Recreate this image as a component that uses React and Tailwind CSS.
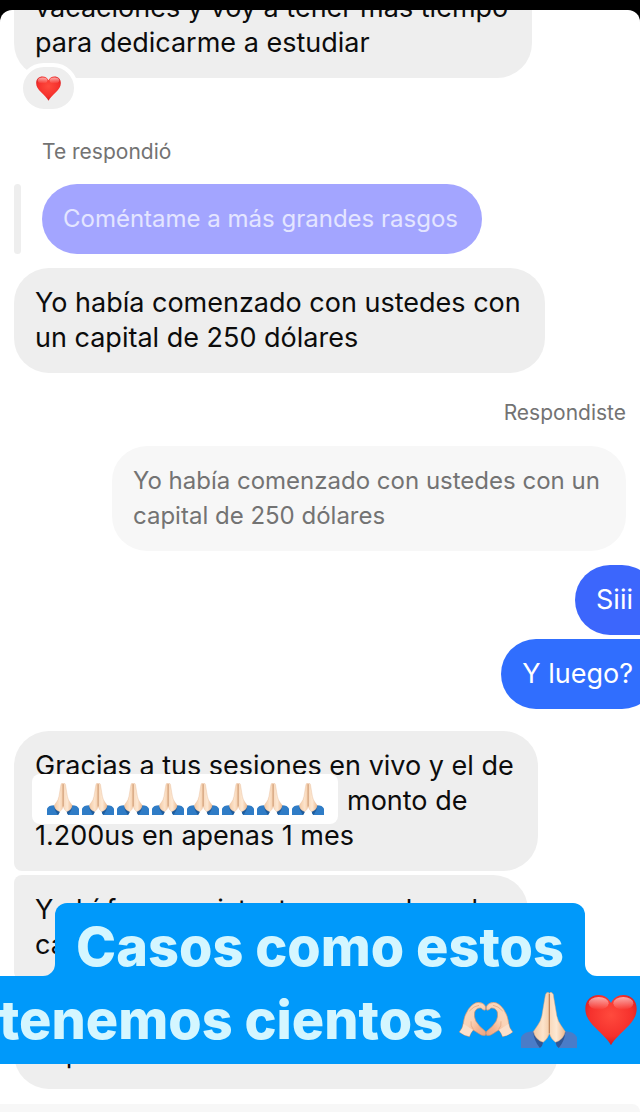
import { clsx } from "clsx"

function Heart({ className }) {
  return (
    <svg viewBox="0 0 156 156" className={className} role="img" aria-label="Corazón rojo">
      <defs>
        <radialGradient id="heartFill" cx="0.5" cy="0.4" r="0.65">
          <stop offset="0" stopColor="#ff4a3d" />
          <stop offset="0.65" stopColor="#f5302c" />
          <stop offset="1" stopColor="#c4161c" />
        </radialGradient>
        <linearGradient id="heartShine" x1="0" y1="0" x2="0" y2="1">
          <stop offset="0" stopColor="#fff" stopOpacity="0.6" />
          <stop offset="1" stopColor="#fff" stopOpacity="0" />
        </linearGradient>
      </defs>
      <path
        d="M78 154C70 138 52 122 32 102C12 82 1 66 1 44C1 19 18 3 41 3C58 3 71 12 78 27C85 12 98 3 115 3C138 3 155 19 155 44C155 66 144 82 124 102C104 122 86 138 78 154Z"
        fill="url(#heartFill)"
      />
      <ellipse cx="41" cy="28" rx="30" ry="19" fill="url(#heartShine)" />
      <ellipse cx="115" cy="28" rx="30" ry="19" fill="url(#heartShine)" />
    </svg>
  )
}

function PrayHands({ className, bright }) {
  return (
    <svg viewBox="0 0 166 166" className={className} role="img" aria-label="Manos juntas">
      <defs>
        <linearGradient id="prayLeft" x1="0" y1="0" x2="1" y2="0">
          <stop offset="0" stopColor="#f3c9a4" />
          <stop offset="0.6" stopColor="#fce3cb" />
          <stop offset="1" stopColor="#f3cdab" />
        </linearGradient>
        <linearGradient id="prayRight" x1="0" y1="0" x2="1" y2="0">
          <stop offset="0" stopColor="#f8d8ba" />
          <stop offset="0.45" stopColor="#fde8d3" />
          <stop offset="1" stopColor="#ecb98f" />
        </linearGradient>
      </defs>
      <g fill={bright ? "#2f7cc6" : "#4a7cc8"}>
        <path d="M0 134Q8 116 38 116Q44 138 66 148Q64 160 56 166H0Z" />
        <path d="M166 134Q158 116 130 116Q124 138 102 148Q104 160 112 166H166Z" />
      </g>
      <g fill={bright ? "#1f5c9c" : "#2f5797"}>
        <path d="M36 117Q42 140 66 148Q64 160 56 166Q38 144 36 117Z" />
        <path d="M132 117Q126 140 102 148Q104 160 112 166Q130 144 132 117Z" />
      </g>
      <path
        d="M84 4Q81 -1 76 2Q72 5 71 16L62 70Q58 88 50 98L37 117Q42 142 66 149Q80 138 84 122Z"
        fill="url(#prayLeft)"
        stroke="#dca57c"
        strokeWidth="1.5"
      />
      <path
        d="M84 4Q87 -1 92 2Q97 5 97 16L106 70Q110 88 118 98L131 117Q126 142 102 149Q88 138 84 122Z"
        fill="url(#prayRight)"
        stroke="#dca57c"
        strokeWidth="1.5"
      />
      <path d="M84 6V122" stroke="#b97c52" strokeWidth="3" />
    </svg>
  )
}

function HeartHands({ className }) {
  const hand =
    "M1 90Q12 78 13 62Q15 42 28 22Q42 2 58 1Q74 2 79 12Q82 20 78 25Q72 25 66 18Q52 17 47 30Q44 44 51 58Q60 74 79 88Q83 94 79 100Q70 103 58 94Q48 87 42 84Q35 92 31 104Q14 100 1 90Z"
  return (
    <svg viewBox="0 0 162 108" className={className} role="img" aria-label="Manos formando un corazón">
      <defs>
        <linearGradient id="loveHand" x1="0" y1="0" x2="1" y2="1">
          <stop offset="0" stopColor="#fbdcc0" />
          <stop offset="0.5" stopColor="#fad3b7" />
          <stop offset="0.75" stopColor="#f3b391" />
          <stop offset="1" stopColor="#e8a583" />
        </linearGradient>
      </defs>
      {["", "translate(162 0) scale(-1 1)"].map((flip) => (
        <g key={flip} transform={flip || undefined}>
          <path d={hand} fill="url(#loveHand)" stroke="#cf936d" strokeWidth="2" />
          <path d="M2 90Q12 80 14 66L42 84Q35 92 31 103Q14 100 2 90Z" fill="#fbe0cc" />
          <path d="M31 27Q44 12 60 10M43 82Q34 72 36 58" fill="none" stroke="#dda27c" strokeWidth="2" />
        </g>
      ))}
    </svg>
  )
}

function Bubble({ className, children }) {
  return (
    <div className={clsx("w-fit pt-[17px] pr-[24px] pb-[18px] pl-[21px] leading-[35px] whitespace-nowrap", className)}>
      {children}
    </div>
  )
}

export default function App() {
  return (
    <main className="relative overflow-hidden bg-black pt-[10px] font-['Inter','Liberation_Sans',sans-serif] text-[27px] text-[#0c0c0c]">
      <section className="flex flex-col overflow-hidden rounded-t-xl bg-white">
        <div className="flex flex-col items-start pl-[14px]">
          <Bubble className="-mt-[37px] rounded-[35px] bg-[#eeeeee]">
            vacaciones y voy a tener más tiempo
            <br />
            para dedicarme a estudiar
          </Bubble>
          <div className="z-10 -mt-[15px] ml-[5px] flex h-[50px] w-[59px] items-center justify-center rounded-full border-4 border-white bg-[#eeeeee]">
            <Heart className="size-[25px]" />
          </div>

          <p className="mt-[25px] ml-[28px] text-[21px] leading-[28px] text-[#737373]">Te respondió</p>
          <div className="mt-[18px] flex gap-[21px]">
            <div className="w-[7px] rounded-sm bg-[#eeeeee]" />
            <Bubble className="rounded-full bg-[#a3a5ff] text-[24px] text-[#e4e5ff]">Coméntame a más grandes rasgos</Bubble>
          </div>
          <Bubble className="mt-[14px] rounded-[35px] bg-[#eeeeee]">
            Yo había comenzado con ustedes con
            <br />
            un capital de 250 dólares
          </Bubble>
        </div>

        {/* Sent messages */}
        <div className="flex flex-col items-end">
          <p className="mt-[26px] mr-[14px] text-[21px] leading-[28px] text-[#737373]">Respondiste</p>
          <Bubble className="mt-[19px] mr-[14px] min-w-[514px] rounded-[35px] bg-[#f7f7f7] text-[24px] text-[#737373]">
            Yo había comenzado con ustedes con un
            <br />
            capital de 250 dólares
          </Bubble>
          <Bubble className="mt-[14px] -mr-[17px] rounded-[35px] rounded-br-lg bg-[#3c66fc] text-white">Siii</Bubble>
          <Bubble className="mt-1 -mr-[17px] rounded-[35px] rounded-tr-lg bg-[#306efe] text-white">Y luego?</Bubble>
        </div>

        <div className="mt-[22px] flex flex-col items-start gap-1 pl-[14px]">
          <Bubble className="rounded-[35px] rounded-bl-lg bg-[#eeeeee]">
            Gracias a tus sesiones en vivo y el de
            <br />
            <span className="relative inline-block h-[35px] w-[312px] align-top">
              {/* Sticker strip laid over the message */}
              <span className="absolute -top-[9px] -left-[3px] flex h-[50px] w-[306px] items-center justify-center gap-[3px] rounded-lg bg-white">
                {Array.from({ length: 8 }, (_, i) => (
                  <PrayHands key={i} bright className="size-8" />
                ))}
              </span>
            </span>
            monto de
            <br />
            1.200us en apenas 1 mes
          </Bubble>
          <Bubble className="min-w-[514px] rounded-l-lg rounded-r-[35px] bg-[#eeeeee]">
            Y ahí fue consistente y ganadora de
            <br />
            casos
          </Bubble>
          <Bubble className="min-w-[544px] rounded-[35px] rounded-tl-lg bg-[#eeeeee]">
            <br />
            capital
          </Bubble>
        </div>
        <div className="mt-[15px] h-[8px] rounded-tr-[20px] bg-[#f7f7f7]" />
      </section>

      {/* Caption */}
      <h1 className="absolute inset-x-0 bottom-12 flex flex-col items-center text-[54px] leading-[88px] font-extrabold whitespace-nowrap text-[#d4f6ff]">
        <span className="relative flex h-[73px] items-start rounded-t-xl bg-[#0099fa] px-[21px]">
          <svg viewBox="0 0 12 12" className="absolute bottom-0 -left-3 size-3" aria-hidden="true">
            <path d="M12 0V12H0A12 12 0 0 0 12 0Z" fill="#0099fa" />
          </svg>
          Casos como estos
          <svg viewBox="0 0 12 12" className="absolute -right-3 bottom-0 size-3" aria-hidden="true">
            <path d="M0 0V12H12A12 12 0 0 1 0 0Z" fill="#0099fa" />
          </svg>
        </span>
        <span className="flex h-[88px] w-full items-center justify-center bg-[#0099fa] pr-1">
          tenemos cientos
          <HeartHands className="ml-[16px] w-[54px] shrink-0" />
          <PrayHands className="ml-[8px] size-14 shrink-0" />
          <Heart className="ml-[8px] size-[52px] shrink-0" />
        </span>
      </h1>
    </main>
  )
}
